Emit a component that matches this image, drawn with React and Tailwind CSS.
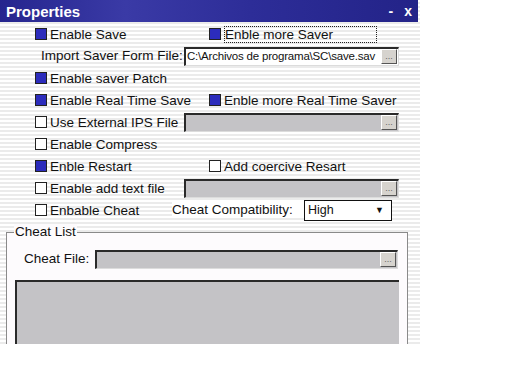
import React from 'react';

const font = { fontFamily: '"Liberation Sans", Arial, sans-serif' };

function Check({ checked }) {
  return (
    <span
      className={
        'inline-block w-[12px] h-[12px] shrink-0 border border-[#222] ' +
        (checked ? 'bg-[#2c2cbc]' : 'bg-white')
      }
    />
  );
}

function Option({ checked, label, focus }) {
  return (
    <div className="flex items-center">
      <Check checked={checked} />
      <span
        className={
          'ml-[3px] leading-[15px] ' +
          (focus ? 'border border-dotted border-[#222] pr-[6px] w-[153px] h-[17px]' : '')
        }
      >
        {label}
      </span>
    </div>
  );
}

function Browse() {
  return (
    <div className="w-[16px] h-[15px] bg-[#d6d3ce] border-t border-l border-t-white border-l-white border-b border-r border-b-[#555] border-r-[#555] flex items-center justify-center text-[9px] leading-none text-[#666]">
      ...
    </div>
  );
}

function FileBox({ value, width, gray }) {
  return (
    <div
      className={
        'h-[19px] flex items-center justify-between border-t-2 border-l-2 border-t-[#2a2a2a] border-l-[#2a2a2a] border-b border-r border-b-[#dcdcdc] border-r-[#dcdcdc] pl-[1px] pr-[1px] ' +
        width +
        (gray ? ' bg-[#c4c3c6]' : ' bg-white')
      }
    >
      <span className="text-[11.5px] leading-none tracking-[-0.2px] whitespace-nowrap">{value}</span>
      <Browse />
    </div>
  );
}

export default function App() {
  return (
    <div className="w-[512px] h-[384px] bg-white text-[13.5px] text-[#111]" style={font}>
      <div className="w-[420px] h-[344px] flex flex-col overflow-hidden bg-[repeating-linear-gradient(to_bottom,#ffffff_0px,#ffffff_2px,#ebebeb_2px,#ebebeb_4px)]">
        <div className="h-[22px] shrink-0 w-[418px] flex items-center justify-between pl-[6px] pr-[6px] bg-[linear-gradient(90deg,#25258e_0%,#3a3aa6_30%,#2d2d98_60%,#232388_100%)] text-white">
          <span className="font-bold text-[15px] leading-none">Properties</span>
          <div className="flex items-center gap-[11px] font-bold text-[14px] leading-none">
            <span>-</span>
            <span>x</span>
          </div>
        </div>

        <div className="flex flex-col shrink-0 pt-[1px]">
          <div className="h-[22px] flex items-center">
            <div className="w-[209px] pl-[35px]"><Option checked label="Enable Save" /></div>
            <Option checked label="Enble more Saver" focus />
          </div>
          <div className="h-[22px] flex items-center">
            <span className="w-[184px] pl-[41px]">Import Saver Form File:</span>
            <FileBox value="C:\Archivos de programa\SC\save.sav" width="w-[215px]" />
          </div>
          <div className="h-[22px] flex items-center pl-[35px]">
            <Option checked label="Enable saver Patch" />
          </div>
          <div className="h-[22px] flex items-center">
            <div className="w-[209px] pl-[35px]"><Option checked label="Enable Real Time Save" /></div>
            <Option checked label="Enble more Real Time Saver" />
          </div>
          <div className="h-[22px] flex items-center">
            <div className="w-[184px] pl-[35px]"><Option label="Use External IPS File" /></div>
            <FileBox value="" width="w-[215px]" gray />
          </div>
          <div className="h-[22px] flex items-center pl-[35px]">
            <Option label="Enable Compress" />
          </div>
          <div className="h-[22px] flex items-center">
            <div className="w-[209px] pl-[35px]"><Option checked label="Enble Restart" /></div>
            <Option label="Add coercive Resart" />
          </div>
          <div className="h-[22px] flex items-center">
            <div className="w-[184px] pl-[35px]"><Option label="Enable add text file" /></div>
            <FileBox value="" width="w-[215px]" gray />
          </div>
          <div className="h-[22px] flex items-center">
            <div className="w-[172px] pl-[35px]"><Option label="Enbable Cheat" /></div>
            <span className="w-[132px] bg-white leading-[16px]">Cheat Compatibility:</span>
            <div className="w-[88px] h-[21px] border border-[#111] bg-white flex items-center justify-between pl-[3px] pr-[7px]">
              <span className="text-[12.5px] leading-none">High</span>
              <span className="text-[9px] leading-none">▼</span>
            </div>
          </div>
        </div>

        <div className="relative mt-[11px] ml-[6px] w-[402px] flex-1 min-h-0 border-l border-r border-t border-[#8a8a8a] bg-[#fdfbfd]">
          <span className="absolute -top-[9px] left-[7px] bg-[#fdfbfd] px-[1px] leading-[16px]">Cheat List</span>
          <div className="flex items-center mt-[15px] h-[22px]">
            <span className="w-[88px] pl-[17px]">Cheat File:</span>
            <FileBox value="" width="w-[303px]" gray />
          </div>
          <div className="mt-[10px] ml-[8px] w-[384px] h-[70px] bg-[#c4c3c6] border-t-2 border-l-2 border-t-[#2a2a2a] border-l-[#2a2a2a]" />
        </div>
      </div>
    </div>
  );
}
